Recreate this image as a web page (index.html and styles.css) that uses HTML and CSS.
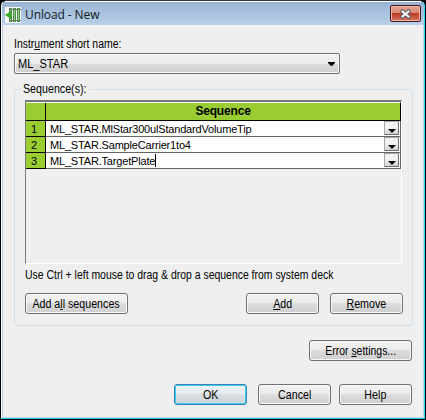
FILE: index.html
```html
<!DOCTYPE html>
<html lang="en">
<head>
<meta charset="utf-8">
<title>Unload - New</title>
<link rel="stylesheet" href="styles.css">
</head>
<body>
<div class="window">
  <header class="titlebar">
    <svg class="app-icon" width="16" height="16" viewBox="0 0 16 16">
      <path fill="#f7fbf5" d="M0 0h16v16H0z"/>
      <path fill="#4f8a4b" d="M4 1h3v14H4zM8 1h3v14H8zM12 1h3v14h-3z"/>
      <path fill="#8fcf83" d="M5 3h1v10H5zM9 3h1v10H9zM13 3h1v10h-1z"/>
      <path fill="#6c7b69" d="M4 2h12v1H4zM4 13h12v1H4z"/>
      <path fill="#35ac29" d="M0 8l6-4v8z"/>
    </svg>
    <h1 class="title">Unload - New</h1>
    <button class="close" aria-label="Close">
      <svg width="13" height="10" viewBox="0 0 13 10">
        <path d="M3.500 2.500l6 5M9.500 2.500l-6 5" stroke="#545866" stroke-width="4" stroke-linecap="square"/>
        <path d="M3.500 2.500l6 5M9.500 2.500l-6 5" stroke="#f7f7f7" stroke-width="2.200" stroke-linecap="square"/>
      </svg>
    </button>
  </header>
  <main class="content">
    <label class="label"><span class="text narrow">Instr<u>u</u>ment short name:</span></label>
    <div class="combo"><span class="text">ML_STAR</span>
      <svg width="7" height="4" viewBox="0 0 7 4"><path d="M0 0h7v1L4 4H3L0 1z"/></svg>
    </div>
    <fieldset class="group">
      <legend><span class="text">Sequence(s):</span></legend>
      <div class="grid">
        <div class="row head"><div class="num"></div><div class="cell">Sequence</div></div>
        <div class="row"><div class="num">1</div><div class="cell"><span>ML_STAR.MlStar300ulStandardVolumeTip</span><i class="drop"></i></div></div>
        <div class="row"><div class="num">2</div><div class="cell"><span>ML_STAR.SampleCarrier1to4</span><i class="drop"></i></div></div>
        <div class="row"><div class="num">3</div><div class="cell"><span>ML_STAR.TargetPlate</span><b class="caret"></b><i class="drop"></i></div></div>
      </div>
      <p class="hint"><span class="text narrow">Use Ctrl + left mouse to drag &amp; drop a sequence from system deck</span></p>
      <div class="actions">
        <button class="btn wide"><span>Add a<u>l</u>l sequences</span></button>
        <span class="spacer"></span>
        <button class="btn"><span><u>A</u>dd</span></button>
        <button class="btn"><span><u>R</u>emove</span></button>
      </div>
    </fieldset>
    <div class="settings"><button class="btn wide"><span class="narrow">Error <u>s</u>ettings...</span></button></div>
    <footer class="footer">
      <button class="btn default"><span>OK</span></button>
      <button class="btn"><span>Cancel</span></button>
      <button class="btn help"><span>Help</span></button>
    </footer>
  </main>
</div>
</body>
</html>
```
FILE: styles.css
```css
* { box-sizing: border-box; }
body {
  margin: 0;
  background: #000;
  font: 12px/14px "Liberation Sans", Arial, sans-serif;
  color: #000;
}
svg { display: block; fill: none; }
u { text-decoration: underline; text-decoration-thickness: 1px; text-underline-offset: 1px; text-decoration-skip-ink: none; }
.text, .btn span {
  display: inline-block;
  white-space: nowrap;
  transform: scaleX(.89);
}
.text { transform-origin: left; }
.text.narrow, .btn .narrow { transform: scaleX(.87); }
.window {
  width: 424px;
  height: 419px;
  margin-left: 1px;
  border-top: 1px solid #30343c;
  border-right: 1px solid #2bd0f5;
  border-bottom: 1px solid #2bd0f5;
  border-left: 1px solid #f2f7fc;
  border-radius: 6px 6px 0 0;
  background: #b9d1ea;
  overflow: hidden;
}
.titlebar {
  display: flex;
  height: 24px;
  padding: 5px 3px 0;
  border-top: 1px solid #fff;
  background: linear-gradient(#98b3d2, #b9d1ea);
}
.app-icon { flex: none; }
.title {
  flex: 1;
  margin: -1px 0 0 4px;
  font: 12px/17px "Open Sans", "Noto Sans", sans-serif;
  letter-spacing: -.1px;
  color: #101820;
}
.close {
  display: flex;
  align-items: center;
  justify-content: center;
  width: 31px;
  height: 17px;
  margin-top: -2px;
  padding: 0;
  border: 1px solid #4b1722;
  border-radius: 2px;
  background: linear-gradient(#e4a493, #d98873 48%, #bd3c24 50%, #d17661);
  box-shadow: inset 0 0 0 1px #e9b3a5;
}
.content {
  height: 392px;
  margin: 0 1px;
  padding: 12px 11px 0;
  background: #efefef;
}
.label { display: block; height: 16px; }
.combo {
  display: flex;
  align-items: center;
  justify-content: space-between;
  width: 326px;
  height: 21px;
  padding: 0 4px 0 3px;
  border: 1px solid #707070;
  border-radius: 2px;
  background: linear-gradient(#f2f2f2, #ebebeb 50%, #dcdcdc 52%, #cfcfcf);
  box-shadow: inset 0 0 0 1px #f8f8f8;
}
.combo .text { transform: scaleX(.92); }
.combo svg { fill: #000; }
.group {
  width: 399px;
  height: 244px;
  margin: 8px 0 0;
  padding: 4px 10px 0;
  border: 1px solid #d0dfec;
  border-radius: 3px;
  min-width: 0;
}
.group legend { width: 68px; height: 14px; margin-left: -4px; padding: 0 2px; }
.grid {
  width: 377px;
  height: 164px;
  border-top: 2px solid #777;
  border-left: 1px solid #777;
  border-right: 1px solid #fff;
  border-bottom: 1px solid #fff;
  font: 11px/16px "Liberation Sans", Arial, sans-serif;
  letter-spacing: -.18px;
}
.row {
  display: flex;
  height: 16px;
  border-bottom: 1px solid #656565;
  border-right: 1px solid #656565;
  background: #fff;
}
.num {
  width: 20px;
  padding-left: 5px;
  border-right: 1px solid #000;
  background: #9acd32;
}
.row:not(.head) .num { height: 16px; border-bottom: 1px solid #000; }
.cell { display: flex; flex: 1; padding-left: 4px; }
.head {
  height: 19px;
  border-top: 1px solid #fff;
  border-color: #fff #000 #000;
}
.head .cell {
  justify-content: center;
  padding: 0;
  background: #9acd32;
  font-size: 12px;
  font-weight: bold;
  line-height: 16px;
}
.caret { width: 1px; height: 13px; margin-top: 1px; background: #000; }
.drop {
  display: flex;
  align-items: center;
  justify-content: center;
  width: 15px;
  height: 14px;
  margin: 0 1px 0 auto;
  padding-top: 5px;
  border: 1px solid #a5a5a5;
  border-right-color: #707070;
  border-bottom-color: #707070;
  background: linear-gradient(#f2f2f2 50%, #d0d0d0);
}
.drop::before { content: ""; border: 4px solid transparent; border-top-color: #000; border-bottom: 0; }
.hint { margin: 4px 0 0; height: 14px; }
.actions { display: flex; gap: 11px; margin: 11px -1px 0 0; }
.spacer { flex: 1; margin-right: -11px; }
.btn {
  display: flex;
  flex: none;
  align-items: center;
  justify-content: center;
  width: 73px;
  height: 21px;
  padding: 0;
  border: 1px solid #707070;
  border-radius: 3px;
  background: linear-gradient(#f2f2f2, #ebebeb 48%, #dddddd 50%, #cfcfcf);
  box-shadow: inset 0 0 0 1px #f8f8f8;
  color: #000;
  font: inherit;
}
.wide { width: 103px; }
.default {
  border-color: #3c7fb1;
  background: linear-gradient(#eff2f3, #e7ebed 48%, #d8dee1 50%, #ccd6da);
  box-shadow: inset 0 0 0 1px #38cdf5;
}
.settings { display: flex; width: 398px; justify-content: flex-end; margin-top: 14px; }
.footer { display: flex; width: 398px; justify-content: flex-end; gap: 11px; margin-top: 23px; }
.help { margin-left: -3px; }
```
